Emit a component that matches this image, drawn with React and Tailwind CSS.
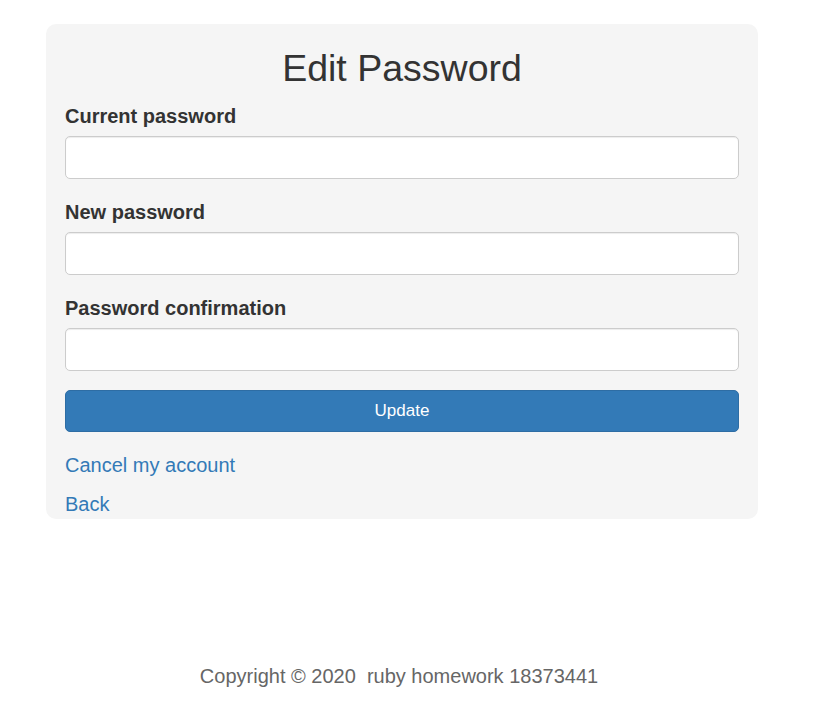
import React from "react";

function Field({ label }) {
  return (
    <div className="mb-[19px]">
      <label className="block text-[20px] leading-[28px] font-bold text-[#333] mb-[6px]">{label}</label>
      <input
        type="password"
        className="block w-full h-[43px] bg-white border border-[#ccc] rounded-[5px] shadow-[inset_0_1px_1px_rgba(0,0,0,0.075)] outline-none px-3"
      />
    </div>
  );
}

export default function App() {
  return (
    <div
      className="w-[804px] pt-6 bg-white min-h-[711px]"
      style={{ fontFamily: '"Liberation Sans", Arial, Helvetica, sans-serif' }}
    >
      <div className="mx-[46px] bg-[#f5f5f5] rounded-[10px] px-[19px] pt-[23.6px]">
        <h1 className="text-[37.5px] leading-[41.25px] text-center text-[#333] font-normal mb-[13px]">
          Edit Password
        </h1>
        <Field label="Current password" />
        <Field label="New password" />
        <Field label="Password confirmation" />
        <button className="block w-full h-[42px] bg-[#337ab7] border border-[#2e6da4] rounded-[5px] text-white text-[17px] mb-[19px]">
          Update
        </button>
        <div className="text-[20px] leading-[28px] mb-[11px]">
          <a href="#" className="text-[#337ab7]">Cancel my account</a>
        </div>
        <div className="text-[20px] leading-[28px] pb-[1px]">
          <a href="#" className="text-[#337ab7]">Back</a>
        </div>
      </div>
      <footer className="mt-[143.4px] w-[798px] text-center text-[20px] leading-[28px] text-[#666] whitespace-pre">
        {"Copyright © 2020  ruby homework 18373441"}
      </footer>
    </div>
  );
}
